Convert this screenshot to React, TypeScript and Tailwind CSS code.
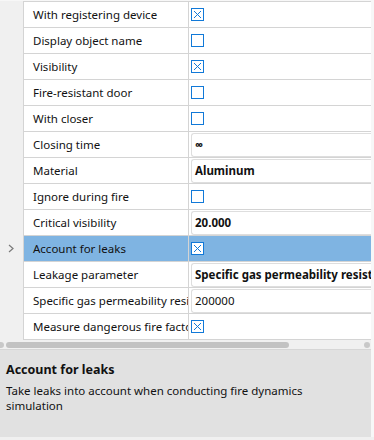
import React from 'react'

type Row = {
    name: string
    kind: 'check' | 'text'
    checked?: boolean
    value?: string
    bold?: boolean
    selected?: boolean
}

const rows: Row[] = [
    { name: 'With registering device', kind: 'check', checked: true },
    { name: 'Display object name', kind: 'check' },
    { name: 'Visibility', kind: 'check', checked: true },
    { name: 'Fire-resistant door', kind: 'check' },
    { name: 'With closer', kind: 'check' },
    { name: 'Closing time', kind: 'text', value: '∞', bold: true },
    { name: 'Material', kind: 'text', value: 'Aluminum', bold: true },
    { name: 'Ignore during fire', kind: 'check' },
    { name: 'Critical visibility', kind: 'text', value: '20.000', bold: true },
    { name: 'Account for leaks', kind: 'check', checked: true, selected: true },
    { name: 'Leakage parameter', kind: 'text', value: 'Specific gas permeability resistance', bold: true },
    { name: 'Specific gas permeability resistance', kind: 'text', value: '200000' },
    { name: 'Measure dangerous fire factors', kind: 'check', checked: true },
]

function CheckBox({ checked }: { checked?: boolean }) {
    return (
        <div className="ml-[2px] flex h-[13px] w-[13px] shrink-0 items-center justify-center border border-[#1179d8] bg-white">
            {checked && (
                <svg width="9" height="9" viewBox="0 0 9 9">
                    <path d="M1 1L8 8M8 1L1 8" stroke="#1179d8" strokeWidth="1" />
                </svg>
            )}
        </div>
    )
}

export default function App() {
    return (
        <div
            className="flex h-[440px] w-[374px] flex-col overflow-hidden bg-[#f7f7f7] text-[11.5px] text-[#111]"
            style={{ fontFamily: '"Noto Sans", "Open Sans", sans-serif' }}
        >
            <div className="flex w-[371px] pt-px">
                {/* gutter */}
                <div className="w-[23px] shrink-0 bg-[#f0f0f0]">
                    {rows.map((r) => (
                        <div key={r.name} className="flex h-[26px] items-center pl-[8px]">
                            {r.selected && (
                                <svg width="6" height="9" viewBox="0 0 6 9">
                                    <path d="M1 1L5 4.5L1 8" stroke="#7a7a7a" strokeWidth="1.2" fill="none" />
                                </svg>
                            )}
                        </div>
                    ))}
                </div>
                <div className="min-w-0 flex-1 border-l border-t border-[#d4d4d4] bg-white">
                    {rows.map((r) => (
                        <div
                            key={r.name}
                            className={`flex h-[26px] border-b border-[#d4d4d4] ${r.selected ? 'bg-[#7fb4e2]' : 'bg-white'}`}
                        >
                            <div className="flex w-[165px] shrink-0 items-center overflow-hidden whitespace-nowrap border-r border-[#d4d4d4] pl-[9px]">
                                {r.name}
                            </div>
                            <div className="flex min-w-0 flex-1 items-center overflow-hidden">
                                {r.kind === 'check' ? (
                                    <CheckBox checked={r.checked} />
                                ) : (
                                    <div
                                        className={`ml-[2px] flex h-[24px] min-w-0 flex-1 items-center overflow-hidden whitespace-nowrap rounded-l-[3px] border border-r-0 border-[#dedede] bg-white pl-[3px] ${r.bold ? 'font-bold' : ''}`}
                                    >
                                        {r.value}
                                    </div>
                                )}
                            </div>
                        </div>
                    ))}
                </div>
            </div>
            {/* horizontal scrollbar */}
            <div className="flex h-[9px] w-[371px] shrink-0 items-center bg-[#f0f0f0]">
                <div className="h-[6px] w-[4px] rounded-r-full bg-[#c8c8c8]" />
                <div className="ml-[2px] h-[6px] w-[283px] rounded-full bg-[#c2c2c2]" />
                <div className="ml-auto mr-[1px] h-[6px] w-[6px] rounded-full bg-[#c8c8c8]" />
            </div>
            <div className="w-[371px] flex-1 border-t border-[#d6d6d6] bg-[#e1e1e1] px-[6px] pt-[11px]">
                <div className="text-[12.5px] font-bold leading-[18px]">Account for leaks</div>
                <div className="mt-[4px] w-[300px] leading-[15px]">
                    Take leaks into account when conducting fire dynamics simulation
                </div>
            </div>
            <div className="h-[3px] shrink-0 bg-[#f0f0f0]" />
        </div>
    )
}
